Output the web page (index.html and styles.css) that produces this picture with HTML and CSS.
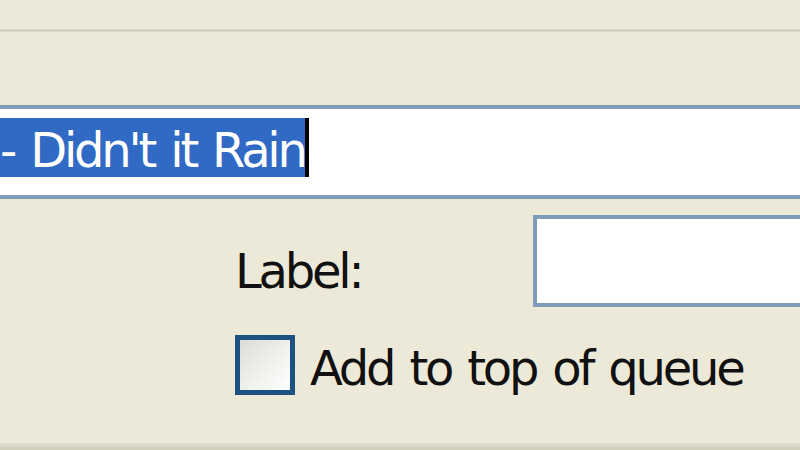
FILE: index.html
```html
<!DOCTYPE html>
<html>
<head>
<meta charset="utf-8">
<link rel="stylesheet" href="styles.css">
</head>
<body>
<div class="page">
  <div class="sep"></div>
  <div class="name-field"><span class="sel">- Didn't it Rain</span><span class="caret"></span></div>
  <div class="label-row">
    <span class="label">Label:</span>
    <div class="label-field"></div>
  </div>
  <div class="check-row">
    <span class="checkbox"></span>
    <span class="check-text">Add to top of queue</span>
  </div>
  <div class="bottom-band"></div>
</div>
</body>
</html>
```
FILE: styles.css
```css
html, body {
  margin: 0;
  padding: 0;
}
body {
  background: #ECE9D8;
  width: 800px;
  height: 450px;
  overflow: hidden;
  font-family: "DejaVu Sans", sans-serif;
  font-size: 48px;
  letter-spacing: -3.2px;
  word-spacing: 4px;
  color: #111;
}
.page {
  display: flex;
  flex-direction: column;
  height: 450px;
}
.sep {
  margin-top: 29px;
  height: 3px;
  background: linear-gradient(#DEDBCB, #D2CEBD, #DEDBCB);
  flex: none;
}
.name-field {
  flex: none;
  margin-top: 73px;
  margin-left: -4px;
  width: 830px;
  height: 77px;
  border: 4px solid #7F9DB9;
  background: #fff;
  display: flex;
  align-items: flex-start;
  padding-top: 9px;
}
.sel {
  display: block;
  background: #316AC5;
  color: #fff;
  height: 55px;
  line-height: 56px;
  padding-top: 4px;
  white-space: pre;
}
.caret {
  display: block;
  width: 4px;
  height: 59px;
  background: #000;
}
.label-row {
  flex: none;
  display: flex;
  align-items: flex-start;
  margin-top: 16px;
  padding-left: 235px;
}
.label {
  width: 298px;
  flex: none;
  line-height: 57px;
  margin-top: 28px;
}
.label-field {
  flex: none;
  width: 300px;
  height: 84px;
  border: 4px solid #7F9DB9;
  background: #fff;
}
.check-row {
  flex: none;
  display: flex;
  align-items: flex-start;
  margin-top: 28px;
  padding-left: 235px;
}
.checkbox {
  flex: none;
  width: 50px;
  height: 50px;
  border: 5px solid #1C5180;
  background: linear-gradient(135deg, #DCDCD7 0%, #F2F2EF 60%, #FFFFFF 100%);
}
.check-text {
  margin-left: 15px;
  line-height: 57px;
  margin-top: 5px;
  white-space: pre;
}
.bottom-band {
  margin-top: auto;
  height: 7px;
  background: linear-gradient(#E2DFCF, #D0CDBA);
  flex: none;
}
```
